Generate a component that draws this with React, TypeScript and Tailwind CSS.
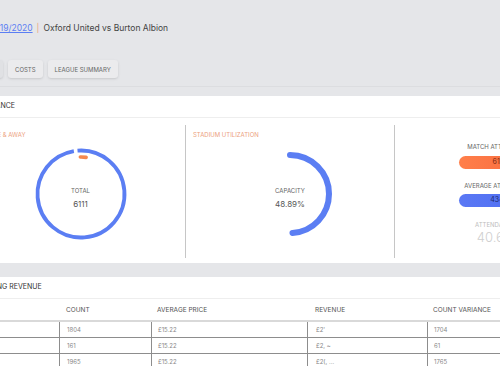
const rows = [
  { label: "Home", count: "1804", avg: "£15.22", revenue: "£2'", variance: "1704" },
  { label: "Away", count: "161", avg: "£15.22", revenue: "£2, ~", variance: "61" },
  { label: "Total", count: "1965", avg: "£15.22", revenue: "£2(, ...", variance: "1765" },
];

const Donut = () => {
  const c = 2 * Math.PI * 43.5;
  const inner = 2 * Math.PI * 37;
  return (
    <svg width="100" height="100" viewBox="0 0 100 100">
      <circle
        cx="50"
        cy="50"
        r="43.5"
        fill="none"
        stroke="#5b7ef3"
        strokeWidth="3.8"
        strokeDasharray={`${(c * 354.5) / 360} ${c}`}
        transform="rotate(-94.6 50 50)"
      />
      <circle
        cx="50"
        cy="50"
        r="37"
        fill="none"
        stroke="#f5884f"
        strokeWidth="3.6"
        strokeLinecap="round"
        strokeDasharray={`${(inner * 9) / 360} ${inner}`}
        transform="rotate(-91 50 50)"
      />
    </svg>
  );
};

const HalfArc = () => {
  const c = 2 * Math.PI * 39;
  return (
    <svg width="100" height="100" viewBox="0 0 100 100">
      <circle
        cx="50"
        cy="50"
        r="39"
        fill="none"
        stroke="#5b7ef3"
        strokeWidth="6"
        strokeLinecap="round"
        strokeDasharray={`${c * 0.4889} ${c}`}
        transform="rotate(-90 50 50)"
      />
    </svg>
  );
};

const ChartCol = (props: { label: string; title: string; value: string; border?: boolean; children: React.ReactNode }) => {
  return (
    <div className={`w-[209px] h-[133px] flex flex-col ${props.border ? "border-l border-[#c6c6c6]" : ""}`}>
      <p className="pt-[6px] pl-[7px] text-[6px] leading-[8px] text-[#ec9f80] uppercase whitespace-nowrap">
        {props.label}
      </p>
      <div className="relative mt-[5px] self-center w-[100px] h-[100px]">
        {props.children}
        <div className="absolute inset-0 flex flex-col items-center justify-center pt-[8px]">
          <p className="text-[6px] leading-[8px] text-[#666]">{props.title}</p>
          <p className="mt-[4px] text-[8px] leading-[10px] text-[#555]">{props.value}</p>
        </div>
      </div>
    </div>
  );
};

export default function App() {
  return (
    <div className="w-[500px] h-[383px] overflow-hidden bg-[#e5e6e9] font-['Inter',sans-serif]">
      <div className="-ml-[40px] w-[660px] px-[10px]">
        <div className="h-[87px] border-b border-[#dcdde0]">
          <div className="pt-[22px] pl-[16px] text-[8.5px] leading-[12px] text-[#444] flex items-center whitespace-nowrap">
            <span className="text-[#5b7ef3] underline">08/19/2020</span>
            <span className="mx-[4px] text-[#ec9f80]">|</span>
            <span>Oxford United vs Burton Albion</span>
          </div>
          <div className="mt-[26px] flex gap-[5px]">
            <div className="w-[33px] h-[18px] rounded-[3px] bg-[#e0e1e4] shadow-sm"></div>
            {["COSTS", "LEAGUE SUMMARY"].map((t) => (
              <div
                key={t}
                className="h-[18px] px-[7px] rounded-[3px] bg-[#ebebed] shadow-sm flex items-center text-[6px] text-[#666] whitespace-nowrap"
              >
                {t}
              </div>
            ))}
          </div>
        </div>

        <div className="mt-[9px] bg-white">
          <div className="h-[22px] border-b border-[#eeeeee] flex items-center text-[7px] text-[#333] -ml-[2px]">
            ATTENDANCE
          </div>
          <div className="flex px-[6px] pt-[7px] pb-[5px]">
            <ChartCol label="Home & Away" title="TOTAL" value="6111">
              <Donut />
            </ChartCol>
            <ChartCol label="Stadium Utilization" title="CAPACITY" value="48.89%" border>
              <HalfArc />
            </ChartCol>
            <div className="w-[209px] h-[133px] border-l border-[#c6c6c6] flex flex-col items-center pt-[18px] whitespace-nowrap">
              <p className="text-[6px] leading-[8px] text-[#666]">MATCH ATTENDANCE</p>
              <div className="mt-[5px] w-[80px] h-[13px] rounded-full bg-gradient-to-r from-[#ff7f4a] to-[#f7683d] flex items-center justify-center text-[7px] text-[#7a2a12]">
                6111
              </div>
              <p className="mt-[13px] text-[6px] leading-[8px] text-[#666]">AVERAGE ATTENDANCE</p>
              <div className="mt-[4px] w-[80px] h-[13px] rounded-full bg-gradient-to-r from-[#5a78f4] to-[#4c6cf2] flex items-center justify-center text-[7px] text-[#1c2a6e]">
                4347
              </div>
              <p className="mt-[14px] text-[6px] leading-[8px] text-[#bdbdbd]">ATTENDANCE %</p>
              <p className="mt-[1px] text-[13px] leading-[14px] font-light text-[#cfcfcf]">40.61%</p>
            </div>
          </div>
        </div>

        <div className="mt-[14px] bg-white h-[120px]">
          <div className="h-[22px] border-b border-[#eeeeee] flex items-center text-[7px] text-[#333]">
            TICKETING REVENUE
          </div>
          <div className="h-[67px] overflow-hidden text-[6px] whitespace-nowrap">
            <div className="flex h-[23px] items-end pb-[4px] border-b-[2px] border-[#d9d9d9] text-[#555] text-[6.5px]">
              <div className="w-[89px] pl-[7px]">TYPE</div>
              <div className="w-[92px] pl-[7px]">COUNT</div>
              <div className="w-[156px] pl-[6px]">AVERAGE PRICE</div>
              <div className="w-[120px] pl-[8px]">REVENUE</div>
              <div className="flex-1 pl-[6px]">COUNT VARIANCE</div>
            </div>
            {rows.map((r) => (
              <div key={r.label} className="flex h-[16px] border-b border-[#8d8d8d] text-[#888]">
                <div className="w-[89px] pl-[7px] flex items-center">{r.label}</div>
                <div className="w-[92px] pl-[7px] border-l border-[#8d8d8d] flex items-center">{r.count}</div>
                <div className="w-[156px] pl-[6px] border-l border-[#8d8d8d] flex items-center">{r.avg}</div>
                <div className="w-[120px] pl-[8px] border-l border-[#8d8d8d] flex items-center">{r.revenue}</div>
                <div className="flex-1 pl-[6px] border-l border-[#8d8d8d] flex items-center">{r.variance}</div>
              </div>
            ))}
          </div>
        </div>
      </div>
    </div>
  );
}
